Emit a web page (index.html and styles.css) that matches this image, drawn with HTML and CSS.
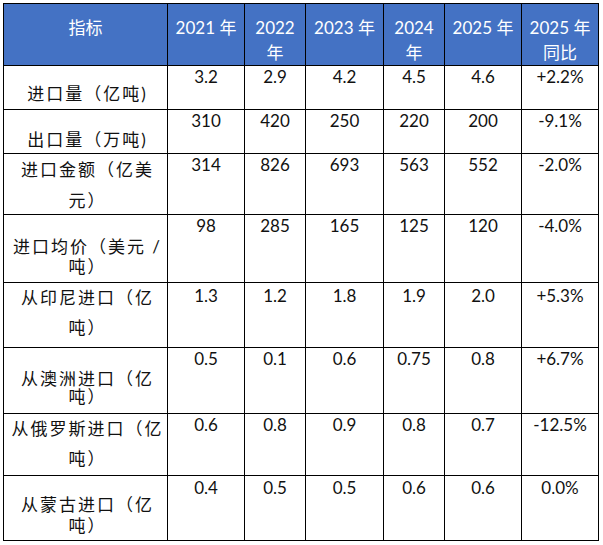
FILE: index.html
```html
<!DOCTYPE html>
<html lang="zh-CN">
<head>
<meta charset="utf-8">
<title>煤炭进出口数据</title>
<link rel="stylesheet" href="styles.css">
</head>
<body>
<div class="sheet" role="table">
  <div class="row head" role="row">
    <div class="cell hd" role="columnheader">指标</div>
    <div class="cell hd" role="columnheader">2021 年</div>
    <div class="cell hd" role="columnheader">2022 年</div>
    <div class="cell hd" role="columnheader">2023 年</div>
    <div class="cell hd" role="columnheader">2024 年</div>
    <div class="cell hd" role="columnheader">2025 年</div>
    <div class="cell hd" role="columnheader">2025 年同比</div>
  </div>
  <div class="row r1" role="row">
    <div class="cell label">进口量（亿吨)</div>
    <div class="cell num">3.2</div>
    <div class="cell num">2.9</div>
    <div class="cell num">4.2</div>
    <div class="cell num">4.5</div>
    <div class="cell num">4.6</div>
    <div class="cell num">+2.2%</div>
  </div>
  <div class="row r2" role="row">
    <div class="cell label">出口量（万吨)</div>
    <div class="cell num">310</div>
    <div class="cell num">420</div>
    <div class="cell num">250</div>
    <div class="cell num">220</div>
    <div class="cell num">200</div>
    <div class="cell num">-9.1%</div>
  </div>
  <div class="row r3" role="row">
    <div class="cell label">进口金额（亿美元）</div>
    <div class="cell num">314</div>
    <div class="cell num">826</div>
    <div class="cell num">693</div>
    <div class="cell num">563</div>
    <div class="cell num">552</div>
    <div class="cell num">-2.0%</div>
  </div>
  <div class="row r4" role="row">
    <div class="cell label">进口均价（美元 / 吨）</div>
    <div class="cell num">98</div>
    <div class="cell num">285</div>
    <div class="cell num">165</div>
    <div class="cell num">125</div>
    <div class="cell num">120</div>
    <div class="cell num">-4.0%</div>
  </div>
  <div class="row r5" role="row">
    <div class="cell label">从印尼进口（亿吨）</div>
    <div class="cell num">1.3</div>
    <div class="cell num">1.2</div>
    <div class="cell num">1.8</div>
    <div class="cell num">1.9</div>
    <div class="cell num">2.0</div>
    <div class="cell num">+5.3%</div>
  </div>
  <div class="row r6" role="row">
    <div class="cell label">从澳洲进口（亿吨）</div>
    <div class="cell num">0.5</div>
    <div class="cell num">0.1</div>
    <div class="cell num">0.6</div>
    <div class="cell num">0.75</div>
    <div class="cell num">0.8</div>
    <div class="cell num">+6.7%</div>
  </div>
  <div class="row r7" role="row">
    <div class="cell label">从俄罗斯进口（亿吨）</div>
    <div class="cell num">0.6</div>
    <div class="cell num">0.8</div>
    <div class="cell num">0.9</div>
    <div class="cell num">0.8</div>
    <div class="cell num">0.7</div>
    <div class="cell num">-12.5%</div>
  </div>
  <div class="row r8" role="row">
    <div class="cell label">从蒙古进口（亿吨）</div>
    <div class="cell num">0.4</div>
    <div class="cell num">0.5</div>
    <div class="cell num">0.5</div>
    <div class="cell num">0.6</div>
    <div class="cell num">0.6</div>
    <div class="cell num">0.0%</div>
  </div>
</div>
</body>
</html>
```

FILE: styles.css
```css
html, body {
  margin: 0;
  padding: 0;
  background: #ffffff;
}

body {
  font-family: Lato, "Noto Sans CJK SC", sans-serif;
  font-size: 17px;
  color: #111111;
}

.sheet {
  display: grid;
  grid-template-columns: 163px 76px 60px 77px 60px 76px 76px;
  grid-template-rows: 61px 43px 43px 60px 67px 64px 65px 61px 64px;
  gap: 1px;
  padding: 1px;
  background: #000000;
  width: max-content;
  margin: 3px 0 0 3px;
}

.row {
  display: contents;
}

.cell {
  background: #ffffff;
  text-align: center;
  box-sizing: border-box;
}

.hd {
  background: #4472c4;
  color: #ffffff;
  line-height: 25px;
  padding: 11px 4px 0;
}

.num {
  line-height: 21px;
  padding: 0 2px;
}

.label {
  letter-spacing: 2px;
  line-height: 20px;
  padding: 0 2px 0 6px;
}

.r1 .label { padding-top: 18px; }
.r2 .label { padding-top: 20px; }
.r3 .label { line-height: 31px; padding-top: 0; }
.r4 .label { padding-top: 22px; }
.r5 .label { line-height: 30px; padding-top: 0; }
.r6 .label { line-height: 18px; padding-top: 22px; }
.r7 .label { line-height: 30px; padding-top: 0; }
.r8 .label { line-height: 21px; padding-top: 18px; }

.r3 .num { padding-top: 0; }
.r5 .num { padding-top: 2px; }
.r8 .num { padding-top: 1px; }
```
